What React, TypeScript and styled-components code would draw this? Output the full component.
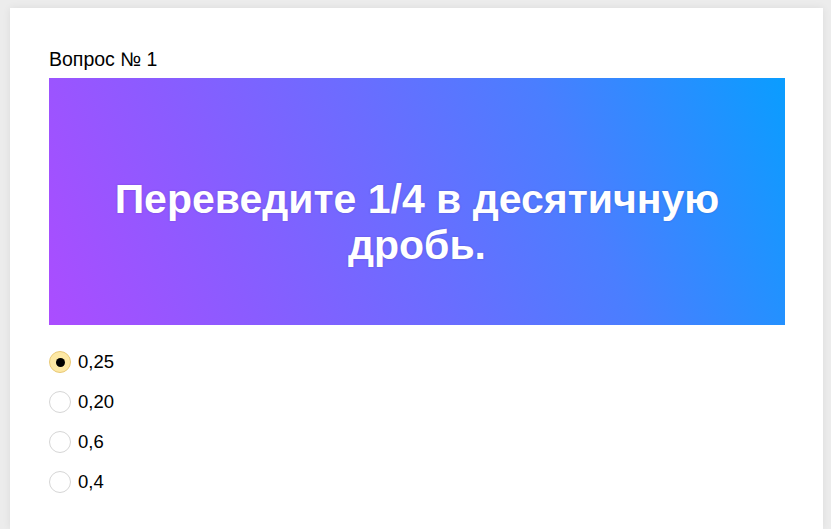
import styled, { createGlobalStyle } from "styled-components";

const GlobalStyle = createGlobalStyle`
  html, body {
    margin: 0;
    padding: 0;
    background: #ececec;
    font-family: "Liberation Sans", Arial, sans-serif;
    color: #000;
  }
`;

const Page = styled.main`
  padding: 8px 8px 0 10px;
  height: 100vh;
  box-sizing: border-box;
  display: flex;
`;

const Card = styled.section`
  flex: 1;
  background: #fff;
  box-shadow: 0 0 8px rgba(0, 0, 0, 0.07);
  padding: 40px 38px 0 39px;
`;

const Title = styled.h2`
  margin: 0 0 8px;
  font-size: 19.5px;
  font-weight: 400;
  line-height: 22px;
`;

const Banner = styled.div`
  height: 247px;
  background: linear-gradient(68deg, #ab4dff 0%, #8a5cff 25%, #6c6cff 47%, #4a7eff 70%, #0a9dff 100%);
  display: flex;
  align-items: center;
  justify-content: center;
  padding-top: 40px;
  box-sizing: border-box;
`;

const BannerText = styled.p`
  margin: 0;
  color: #fff;
  font-family: "Liberation Sans", Arial, sans-serif;
  font-weight: 700;
  font-size: 41px;
  line-height: 46px;
  text-align: center;
  text-shadow: 0 0 2px rgba(60, 40, 120, 0.35);
`;

const Options = styled.ul`
  list-style: none;
  margin: 26px 0 0;
  padding: 0;
  display: flex;
  flex-direction: column;
  gap: 18px;
`;

const Option = styled.li`
  display: flex;
  align-items: center;
  gap: 7px;
  height: 22px;
  font-size: 18.5px;
`;

const Radio = styled.span<{ $checked?: boolean }>`
  width: 22px;
  height: 22px;
  box-sizing: border-box;
  border-radius: 50%;
  border: 1px solid ${(p) => (p.$checked ? "#e9c977" : "#d6d6d6")};
  background: ${(p) => (p.$checked ? "#fde8a4" : "#fff")};
  display: flex;
  align-items: center;
  justify-content: center;

  &::after {
    content: "";
    display: ${(p) => (p.$checked ? "block" : "none")};
    width: 9px;
    height: 9px;
    border-radius: 50%;
    background: #000;
  }
`;

const answers = ["0,25", "0,20", "0,6", "0,4"];

export default function App() {
  return (
    <>
      <GlobalStyle />
      <Page>
        <Card>
          <Title>Вопрос № 1</Title>
          <Banner>
            <BannerText>
              Переведите 1/4 в десятичную
              <br />
              дробь.
            </BannerText>
          </Banner>
          <Options>
            {answers.map((a, i) => (
              <Option key={a}>
                <Radio $checked={i === 0} />
                {a}
              </Option>
            ))}
          </Options>
        </Card>
      </Page>
    </>
  );
}
